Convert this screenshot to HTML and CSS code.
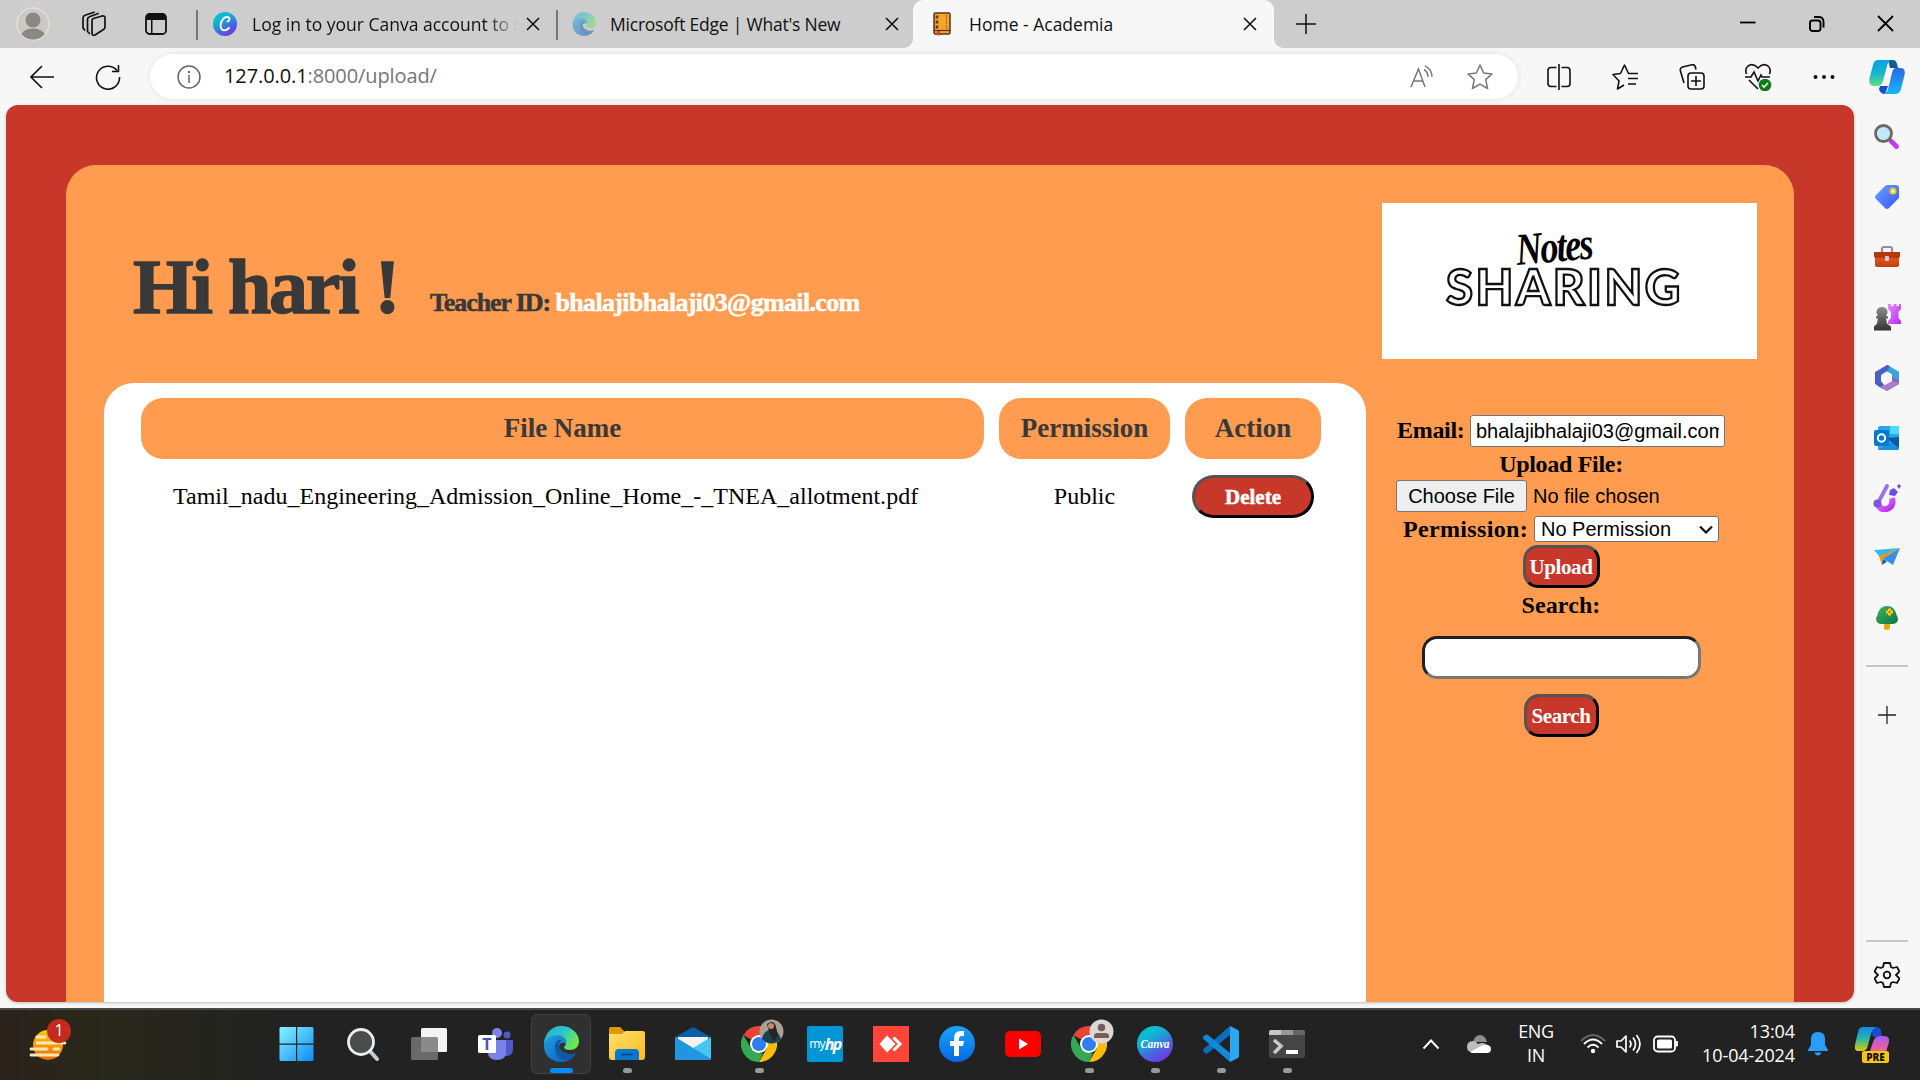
FILE: index.html
```html
<!DOCTYPE html>
<html lang="en">
<head>
<meta charset="utf-8">
<title>Home - Academia</title>
<link rel="stylesheet" href="styles.css">
</head>
<body>
<svg class="defs" width="0" height="0" aria-hidden="true">
  <defs>
    <linearGradient id="canva" x1="0.2" y1="0" x2="0.8" y2="1"><stop offset="0" stop-color="#00c4cc"/><stop offset=".3" stop-color="#10b3d4"/><stop offset=".65" stop-color="#4668e0"/><stop offset="1" stop-color="#7d2ae8"/></linearGradient>
    <linearGradient id="edgeTop" x1="0" y1="0" x2="1" y2=".5"><stop offset="0" stop-color="#2aa9e0"/><stop offset=".55" stop-color="#2fc6c8"/><stop offset="1" stop-color="#6be84f"/></linearGradient>
    <linearGradient id="edgeLow" x1="0" y1="0" x2=".8" y2="1"><stop offset="0" stop-color="#1fa0e4"/><stop offset="1" stop-color="#0a62bd"/></linearGradient>
    <linearGradient id="win" x1="0" y1="0" x2="1" y2="1"><stop offset="0" stop-color="#86f4fe"/><stop offset="1" stop-color="#0b8bf8"/></linearGradient>
    <linearGradient id="copA" x1="0" y1="0" x2="0" y2="1"><stop offset="0" stop-color="#0aa0e2"/><stop offset=".5" stop-color="#14b6cf"/><stop offset="1" stop-color="#62dc86"/></linearGradient>
    <linearGradient id="copB" x1="0" y1="0" x2="0" y2="1"><stop offset="0" stop-color="#2b6be0"/><stop offset="1" stop-color="#16b8ff"/></linearGradient>
    <linearGradient id="tag" x1="0" y1="0" x2="1" y2="1"><stop offset="0" stop-color="#69a8ff"/><stop offset="1" stop-color="#3b4fff"/></linearGradient>
    <linearGradient id="fuchsia" x1="0" y1="0" x2="1" y2="1"><stop offset="0" stop-color="#e58cff"/><stop offset="1" stop-color="#b829f0"/></linearGradient>
    <linearGradient id="pawn" x1="0" y1="0" x2="0" y2="1"><stop offset="0" stop-color="#8d8d8d"/><stop offset="1" stop-color="#333"/></linearGradient>
    <linearGradient id="red" x1="0" y1="0" x2="0" y2="1"><stop offset="0" stop-color="#e8672f"/><stop offset="1" stop-color="#c63d0d"/></linearGradient>
    <linearGradient id="folder" x1="0" y1="0" x2="1" y2="1"><stop offset="0" stop-color="#ffdf70"/><stop offset="1" stop-color="#fbba1a"/></linearGradient>
    <linearGradient id="fb" x1="0" y1="0" x2="0" y2="1"><stop offset="0" stop-color="#18a4fb"/><stop offset="1" stop-color="#0668e1"/></linearGradient>
    <linearGradient id="rainA" x1="0" y1="0" x2="0" y2="1"><stop offset="0" stop-color="#1a86ea"/><stop offset=".45" stop-color="#22b3b0"/><stop offset=".75" stop-color="#7cc24a"/><stop offset="1" stop-color="#e8c51c"/></linearGradient>
    <linearGradient id="rainB" x1="0" y1="0" x2="0" y2="1"><stop offset="0" stop-color="#a25cf2"/><stop offset=".6" stop-color="#ee5c9c"/><stop offset="1" stop-color="#f57f5c"/></linearGradient>
    <linearGradient id="sun" x1="0" y1="0" x2="0" y2="1"><stop offset="0" stop-color="#ffcd00"/><stop offset="1" stop-color="#ea6a07"/></linearGradient>
    <linearGradient id="tree" x1="0" y1="0" x2="1" y2="1"><stop offset="0" stop-color="#42b35c"/><stop offset="1" stop-color="#0d7741"/></linearGradient>
    <symbol id="x" viewBox="0 0 14 14"><path d="M1 1l12 12M13 1L1 13" fill="none" stroke="#111" stroke-width="1.6"/></symbol>
    <symbol id="edge" viewBox="0 0 36 36">
      <path fill="url(#edgeLow)" d="M1 20C0 11 6 7 15 9c5 1 9 5 8 9-5-4-9 2-6 7 3 5 10 6 16 2-3 6-9 9-15 9C8 36 1 29 1 20z"/>
      <path fill="#1458a5" d="M12 20c0-4 3-7 7-6-4 3-4 8 0 11 4 3 9 4 14 2-4 8-21 12-21-7z"/>
      <path fill="url(#edgeTop)" d="M1 17C2 7 9 0 18 0c11 0 18 8 18 15 0 6-4 9-9 9-4 0-6-1-6-3 2-2 3-5 1-8C18 7 6 8 1 17z"/>
    </symbol>
    <symbol id="chrome" viewBox="0 0 36 36">
      <path fill="#ea4335" d="M18 18L2.400 9A18 18 0 0 1 33.600 9z"/>
      <path fill="#fbbc05" d="M18 9h15.600A18 18 0 0 1 18 36l7.800-13.500z"/>
      <path fill="#34a853" d="M2.400 9l7.800 13.500L18 27l4 .500L18 36A18 18 0 0 1 2.400 9z"/>
      <circle cx="18" cy="18" r="9" fill="#fff"/><circle cx="18" cy="18" r="7" fill="#2f7df0"/>
    </symbol>
  </defs>
</svg>

<header class="tabs">
  <div class="tool profile"><svg width="34" height="34" viewBox="0 0 34 34"><defs><clipPath id="pc"><circle cx="17" cy="17" r="15.500"/></clipPath></defs><circle cx="17" cy="17" r="16" fill="#cbc9c5" stroke="#e2e0dc" stroke-width="1.400"/><g clip-path="url(#pc)" fill="#8b8783"><circle cx="17" cy="13" r="7.500"/><ellipse cx="17" cy="29.500" rx="12" ry="8"/></g></svg></div>
  <div class="tool spaces"><svg width="26" height="26" viewBox="0 0 26 26" fill="none" stroke="#111" stroke-width="1.700" stroke-linejoin="round" stroke-linecap="round"><path d="M12 9.500q0-1.500 1.500-2L22 5q3-.500 3 2v9q0 1.500-1.500 2.500L15 24q-3 1-3-2zM7.500 20V8.500q0-2 2-2.700L18 2.500M3 17V7q0-2 2-2.700L14 1.200M7.500 20.500l2 2M3 17l1.500 2"/></svg></div>
  <div class="tool actions"><svg width="22" height="22" viewBox="0 0 22 22"><rect x="1" y="1" width="20" height="20" rx="3.500" fill="none" stroke="#111" stroke-width="1.800"/><path d="M1 7V4q0-3 3-3h14q3 0 3 3v3zM6 6h1.500v15H6z" fill="#111"/></svg></div>
  <div class="tab canva-tab">
    <svg width="24" height="24" viewBox="0 0 24 24"><circle cx="12" cy="12" r="12" fill="url(#canva)"/><path d="M14.500 9.500c3-1 2.500-4.500-.500-4.500-4.500 0-7.500 7-6 11 1.300 3.300 5 3 8 0" fill="none" stroke="#fff" stroke-width="1.800" stroke-linecap="round"/></svg>
    <span class="tab-title t-canva">Log in to your Canva account to s</span>
    <svg width="14" height="14"><use href="#x"/></svg>
  </div>
  <div class="tab edge-tab">
    <svg class="faded" width="24" height="24"><use href="#edge"/></svg>
    <span class="tab-title t-edge">Microsoft Edge | What's New</span>
    <svg width="14" height="14"><use href="#x"/></svg>
  </div>
  <div class="tab active">
    <svg width="24" height="24" viewBox="0 0 24 24"><rect x="4" y="1" width="16" height="21" rx="1.500" fill="#f5a52b" stroke="#53351d" stroke-width="1.500"/><path d="M4 18.500h16" stroke="#53351d" stroke-width="1.200"/><path d="M16.500 3v14" stroke="#86521a" stroke-width=".9" stroke-dasharray="1.500 1"/><path d="M7 3.500v3M7 8.500v3M7 13.500v3" stroke="#6b3527" stroke-width="2.600"/><path d="M7 19v5l1.500-1.500L10 24v-5z" fill="#e03e35"/></svg>
    <span class="tab-title t-home">Home - Academia</span>
    <svg width="14" height="14"><use href="#x"/></svg>
  </div>
  <svg class="newtab" width="20" height="20" viewBox="0 0 20 20"><path d="M10 0v20M0 10h20" stroke="#111" stroke-width="1.500"/></svg>
  <div class="window-buttons">
    <svg width="16" height="16" viewBox="0 0 16 16"><path d="M0 7.500h15.500" stroke="#000" stroke-width="1.800"/></svg>
    <svg width="16" height="18" viewBox="0 0 16 18" fill="none" stroke="#000" stroke-width="1.900"><rect x="1" y="5.500" width="10.500" height="10.500" rx="2.500"/><path d="M5 2h4.500q5 0 5 5v5.500"/></svg>
    <svg width="17" height="17" viewBox="0 0 17 17"><path d="M1 1l15 15M16 1L1 16" stroke="#000" stroke-width="1.800"/></svg>
  </div>
</header>

<nav class="toolbar">
  <div class="nav-cell back"><svg width="24" height="24" viewBox="0 0 24 24" fill="none" stroke="#111" stroke-width="1.600"><path d="M24 12H1M12 1L1 12l11 11"/></svg></div>
  <div class="nav-cell reload"><svg width="26" height="26" viewBox="0 0 26 26" fill="none" stroke="#111" stroke-width="1.600"><path d="M22 6.500A11.500 11.500 0 1 0 24.500 13M23.500 1v6.500H17"/></svg></div>
  <div class="address">
    <svg width="24" height="24" viewBox="0 0 24 24" fill="none" stroke="#666" stroke-width="1.500"><circle cx="12" cy="12" r="11"/><path d="M12 10v8"/><path d="M12 6v2" stroke-width="2"/></svg>
    <div class="url"><b>127.0.0.1</b>:8000/upload/</div>
    <svg width="24" height="24" viewBox="0 0 24 24" fill="none" stroke="#777" stroke-width="1.500"><path d="M1 22L8.500 4 15 22M3.500 16h9.300M14 4.500q4 2.500 4 7.500M15 .8q7 3.500 7 11"/></svg>
    <svg width="26" height="26" viewBox="0 0 26 26" fill="none" stroke="#777" stroke-width="1.500" stroke-linejoin="round"><path d="M13 1l3.600 8 8.400.900-6.300 5.700 1.900 8.900L13 20.200l-7.600 4.300 1.900-8.900L1 9.900 9.400 9z"/></svg>
  </div>
  <div class="nav-tools">
    <svg width="26" height="26" viewBox="0 0 26 26" fill="none" stroke="#111" stroke-width="1.600"><path d="M13 0v26M10.500 3.500H5q-3 0-3 3v13q0 3 3 3h5.500M15.500 3.500H21q3 0 3 3v13q0 3-3 3h-5.500"/></svg>
    <svg width="26" height="26" viewBox="0 0 26 26" fill="none" stroke="#111" stroke-width="1.600" stroke-linejoin="round"><path d="M12 21l-6.500 4 1.500-8-6-6.500 7.500-1L12.500 1l4 8.500H26M16 14.500h10M16 20h8"/></svg>
    <svg width="26" height="26" viewBox="0 0 26 26" fill="none" stroke="#111" stroke-width="1.600"><rect x="9" y="9" width="16" height="16" rx="3"/><path d="M17 12v10M12 17h10M5 19L1.300 6.500Q.8 4 3.500 3L13 .8q2.500-.5 3.300 2L17 5.500"/></svg>
    <svg width="28" height="28" viewBox="0 0 28 28" fill="none" stroke="#111" stroke-width="1.600"><path d="M2.500 11Q.5 6 4 3q5-3.500 10 2 5-5.500 10-2 3.500 3 1.500 8M1 14h6l3-5 4 9 3-6 1 2h8M5 17l9 9"/><circle cx="21" cy="22" r="6.300" fill="#0f7b17" stroke="none"/><path d="M18 22l2 2 4-4" stroke="#fff"/></svg>
    <svg width="24" height="24" viewBox="0 0 24 24" fill="#111"><circle cx="3.500" cy="12" r="2"/><circle cx="12" cy="12" r="2"/><circle cx="20.500" cy="12" r="2"/></svg>
  </div>
  <div class="nav-cell copilot"><svg width="36" height="36" viewBox="0 0 36 36"><path d="M19 1h5q3 0 4 4l1 4h-8z" fill="#125c91"/><path d="M11 27h8l-3 8q-5 0-6-5z" fill="#1a4cd0"/><path d="M9 1h13q-3 1-4 6l-4 15q-1 5-6 5H5q-6 0-4.500-8L4 6q1-5 5-5z" fill="url(#copA)"/><path d="M27 9h4q6 0 4.500 7L32 30q-1 5-6 5H14q4-1 5-5l4-16q1-5 4-5z" fill="url(#copB)"/></svg></div>
</nav>

<div class="content">
  <main class="viewport">
    <div class="card">
      <section class="left">
        <div class="greeting"><h1>Hi hari !</h1><h2>Teacher ID: <span>bhalajibhalaji03@gmail.com</span></h2></div>
        <div class="panel">
          <div class="row head"><div>File Name</div><div>Permission</div><div>Action</div></div>
          <div class="row"><div class="file">Tamil_nadu_Engineering_Admission_Online_Home_-_TNEA_allotment.pdf</div><div class="perm">Public</div><div class="act"><button class="btn delete">Delete</button></div></div>
        </div>
      </section>
      <aside class="right">
        <div class="logo"><span class="logo-notes">Notes</span><span class="logo-sharing">SHARING</span></div>
        <form class="form">
          <div class="field email"><label>Email:</label><input class="mail" type="text" value="bhalajibhalaji03@gmail.com"></div>
          <label class="center upload-label">Upload File:</label>
          <div class="field file-field"><span class="choose">Choose File</span><span class="nofile">No file chosen</span></div>
          <div class="field permission"><label>Permission:</label><div class="select"><span>No Permission</span><svg width="14" height="9" viewBox="0 0 14 9"><path d="M1 1.500l6 6 6-6" fill="none" stroke="#111" stroke-width="2.200"/></svg></div></div>
          <button type="button" class="btn upload">Upload</button>
          <label class="center search-label">Search:</label>
          <input class="search" type="text">
          <button type="button" class="btn find">Search</button>
        </form>
      </aside>
    </div>
  </main>
  <aside class="sidebar">
    <div class="apps">
      <svg width="26" height="26" viewBox="0 0 26 26"><path d="M17 17l5.500 5.500" stroke="#c23df5" stroke-width="4.800" stroke-linecap="round"/><path d="M14 14l3 3" stroke="#6b6967" stroke-width="3"/><circle cx="9.500" cy="9.500" r="8" fill="#c4e8fb" stroke="#6b6967" stroke-width="2.800"/></svg>
      <svg width="26" height="26" viewBox="0 0 26 26"><path d="M13 1h9q3 0 3 3v9q0 1-1 2l-9 9q-2 2-4 0l-9-9q-2-2 0-4l9-9q1-1 2-1z" fill="url(#tag)"/><circle cx="19" cy="7" r="2.500" fill="#fff" stroke="#f5c816" stroke-width="2"/></svg>
      <svg width="28" height="26" viewBox="0 0 28 26"><path d="M9 8V5q0-2 2-2h6q2 0 2 2v3" fill="none" stroke="#929292" stroke-width="2.200"/><rect x="2" y="8" width="24" height="15" rx="2" fill="url(#red)"/><path d="M1 8h26v4q0 2-3 2H4q-3 0-3-2z" fill="#b5380e"/><rect x="12" y="12" width="4" height="5" rx="1" fill="#ccc"/></svg>
      <svg width="28" height="28" viewBox="0 0 28 28"><path d="M15 1h3v2h2.500V1h3v2H26V1h2v5l-2.500 3v6l2.500 3v3H15v-3l3-3V9l-3-3z" fill="url(#fuchsia)"/><path d="M9 4a5 5 0 0 1 4 8.500l2 1v2h-2l1 5 4 3v4H1v-4l3-3 1-5H3v-2l2-1A5 5 0 0 1 9 4z" fill="url(#pawn)"/></svg>
      <svg width="26" height="28" viewBox="0 0 26 28"><path d="M13 1l12 7v12L18 16V10l-5-3-8 4z" fill="#37a0dc"/><path d="M25 20l-12 7-9-5 9-1 5-3V9l7 4z" fill="#8e67ba"/><path d="M13 1l12 7v8l-7-3v-3l-6-3z" fill="#36a4df"/><path d="M13 1L1 8v12l8 5 1-4-3-4v-6l6-4 3-5z" fill="#4b5fc4"/><path d="M25 19l-12 8-7-4 7-3 5-3z" fill="#a681ca"/><circle cx="13" cy="14" r="4.500" fill="#f7f7f7"/></svg>
      <svg width="26" height="26" viewBox="0 0 26 26"><path d="M6 1h17q2 0 2 2v20q0 2-2 2H4V3q0-2 2-2z" fill="#28a8ea"/><path d="M16 1h9v8h-9z" fill="#50d9ff"/><path d="M4 25l21-12v10q0 2-2 2z" fill="#1490df"/><path d="M12 13l13 10V12z" fill="#0a5c9d"/><rect x="0" y="5" width="15" height="16" rx="2" fill="#0078d4"/><circle cx="7.500" cy="13" r="3.700" fill="none" stroke="#fff" stroke-width="2"/></svg>
      <svg width="28" height="28" viewBox="0 0 28 28"><path d="M4 19q4 8.500 11 5.500 6-3 4-10.500" fill="none" stroke="url(#fuchsia)" stroke-width="6"/><path d="M14 2L5 19" stroke="#9a73e4" stroke-width="3.800" stroke-linecap="round"/><circle cx="4.500" cy="19.500" r="4" fill="#7d55df"/><path d="M17 6l4-2 4 4-3 4-6-1zM24 2l2-2 2 2-2 3z" fill="#6f4bec"/></svg>
      <svg width="26" height="24" viewBox="0 0 26 24"><path d="M0 4L26 2 6 11z" fill="#35baf3"/><path d="M5 10L26 2 9 13l-1 6z" fill="#e99a12"/><path d="M9 12.500L26 2l-7 17z" fill="#368ff0"/><path d="M9 13l-1 6 5-3.500z" fill="#0d58b5"/></svg>
      <svg width="24" height="26" viewBox="0 0 24 26"><path d="M9 16h6v8q-3 2-6 0z" fill="#f5a414"/><path d="M12 1c6 0 9 5 9.500 9 3 4 1 9-3.500 9H6c-4.500 0-6.500-5-3.500-9C3 6 6 1 12 1z" fill="url(#tree)"/><path d="M14.500 3.500v7M11 7h7" stroke="#ffcd17" stroke-width="3"/><circle cx="14.500" cy="7" r="1.200" fill="#db6c00"/></svg>
    </div>
    <hr>
    <svg class="plus" width="18" height="18" viewBox="0 0 18 18"><path d="M9 0v18M0 9h18" stroke="#222" stroke-width="1.300"/></svg>
    <hr class="low">
    <svg class="gear" width="26" height="26" viewBox="0 0 26 26" fill="none" stroke="#111" stroke-width="1.800" stroke-linejoin="round"><path d="M10 1h6l1 4 2 1 4-1 2.500 4.500L22 13l3.500 3.500L23 21l-4-1-2 1-1 4h-6l-1-4-2-1-4 1-2.500-4.500L4 13 .5 9.500 3 5l4 1 2-1z"/><circle cx="13" cy="13" r="3.300"/></svg>
  </aside>
</div>

<footer class="taskbar">
  <div class="weather"><svg width="44" height="48" viewBox="0 0 44 48"><ellipse cx="23" cy="27" rx="15" ry="15" fill="url(#sun)"/><path d="M12 19h8M12 25h20M6 31h16M29 31h5M6 37h27M35 25h5" stroke="#fbe5b4" stroke-width="2.800" stroke-linecap="round"/></svg><span class="badge">1</span></div>
  <div class="dock">
    <div><svg width="36" height="36" viewBox="0 0 36 36"><path d="M2 1h15v16.500H.500V2.500Q.500 1 2 1zM18.200 1H33q1.500 0 1.500 1.500v15H18.200zM.500 18.700H17V35H2Q.500 35 .500 33.500zM18.200 18.700h16.300v14.800q0 1.500-1.500 1.500H18.200z" fill="url(#win)"/></svg></div>
    <div><svg width="34" height="36" viewBox="0 0 34 36"><path d="M23 24l8 9" stroke="#c8ccd0" stroke-width="4" stroke-linecap="round"/><circle cx="15" cy="16" r="12.500" fill="#4a4c4d" stroke="#eceeee" stroke-width="2.800"/></svg></div>
    <div><svg width="36" height="36" viewBox="0 0 36 36"><rect x="10" y="2" width="26" height="24" rx="1.500" fill="#f3f3f3"/><rect x="0" y="11" width="27" height="23" rx="1.500" fill="#777" opacity=".85"/></svg></div>
    <div><svg width="36" height="36" viewBox="0 0 36 36"><circle cx="20" cy="7" r="5" fill="#7b83eb"/><circle cx="30" cy="9" r="3.500" fill="#5059c9"/><path d="M24 14h12v9q0 7-7 7h-5z" fill="#5059c9"/><path d="M11 14h18v12q0 8-9 8t-9-8z" fill="#7b83eb"/><rect x="1" y="9" width="18" height="18" rx="1.500" fill="#fff"/><text x="10" y="24" text-anchor="middle" class="teams-t">T</text></svg></div>
    <div class="current"><svg width="36" height="36"><use href="#edge"/></svg></div>
    <div class="open"><svg width="36" height="36" viewBox="0 0 36 36"><path d="M0 3q0-2 2-2h9l4 4v3H0z" fill="#dc9a08"/><path d="M0 8h13l3-3h18q2 0 2 2v24q0 3-3 3H3q-3 0-3-3z" fill="url(#folder)"/><path d="M6 34V27q0-4 4-4h16q4 0 4 4v7z" fill="#0877cf"/><path d="M12 28.500h12" stroke="#0b508e" stroke-width="2"/></svg></div>
    <div><svg width="36" height="36" viewBox="0 0 36 36"><path d="M18 1l18 10v3H0v-3z" fill="#0a5ea8"/><path d="M3 11h30v16H3z" fill="#f2f2f2"/><path d="M0 11l18 11L36 11v21q0 2-2 2H2q-2 0-2-2z" fill="#45c5f2"/><path d="M0 11l36 22q-1 1-2 1H2q-2 0-2-2z" fill="#2295e0"/></svg></div>
    <div class="open"><svg width="36" height="36"><use href="#chrome"/></svg><svg class="who" width="25" height="25" viewBox="0 0 25 25"><circle cx="12.500" cy="12.500" r="12" fill="#aaa291"/><path d="M3 20q2-9 9-9t10 9q-10 9-19 0z" fill="#174350"/><path d="M8 5q7-5 9 3l2 8-4 7-5-10z" fill="#2a2220"/><circle cx="12" cy="7" r="3" fill="#c28c6d"/></svg></div>
    <div><div class="myhp"><span>my</span><b>hp</b></div></div>
    <div><svg width="36" height="36" viewBox="0 0 36 36"><path d="M0 0h36v36H0z" fill="#ff443a"/><path d="M14 9.500l8.500 8.500-8.500 8.500L6.500 18z" fill="#fff"/><path d="M20.500 11.500L27 18l-6.500 6.500" fill="none" stroke="#fff" stroke-width="3"/></svg></div>
    <div><svg width="36" height="36" viewBox="0 0 36 36"><circle cx="18" cy="18" r="18" fill="url(#fb)"/><path d="M15 30V20h-4v-5h4v-3q0-7 7-7h3v5h-2q-3 0-3 3v2h5l-1 5h-4v10z" fill="#fff"/></svg></div>
    <div><svg width="36" height="26" viewBox="0 0 36 26"><rect width="36" height="26" rx="5" fill="#f00"/><path d="M14 7.500l9 5.500-9 5.500z" fill="#fff"/></svg></div>
    <div class="open"><svg width="36" height="36"><use href="#chrome"/></svg><svg class="who" width="25" height="25" viewBox="0 0 25 25"><circle cx="12.500" cy="12.500" r="12" fill="#ded8d5"/><circle cx="12.500" cy="8.500" r="3.800" fill="#735f58"/><path d="M5 19v-2q0-3 4-3h7q4 0 4 3v2z" fill="#735f58"/></svg></div>
    <div class="open"><svg width="36" height="36" viewBox="0 0 36 36"><circle cx="18" cy="18" r="18" fill="url(#canva)"/><text x="18" y="21.500" text-anchor="middle" class="canva-t" textLength="29" lengthAdjust="spacingAndGlyphs">Canva</text></svg></div>
    <div class="open"><svg width="36" height="36" viewBox="0 0 36 36"><path d="M27 0l8 4q1 .5 1 2v24q0 1.500-1 2l-8 4z" fill="#29a9f1"/><path d="M27 0v9L5 27q-1.500 1-3 0l-1.500-1.500q-1-1.500 0-2.500z" fill="#0870bd"/><path d="M27 36v-9L5 9Q3.500 8 2 9L.5 10.500q-1 1.500 0 2.500z" fill="#1389d5"/></svg></div>
    <div class="open"><svg width="36" height="28" viewBox="0 0 36 28"><rect y="0" width="36" height="28" rx="2" fill="#454545"/><path d="M2 0h10v5H0V2q0-2 2-2z" fill="#c8c8c8"/><path d="M12 0h12v5H12z" fill="#999"/><path d="M24 0h10q2 0 2 2v3H24z" fill="#666"/><path d="M5 10l7 6-7 7" fill="none" stroke="#c9c9c9" stroke-width="3.500"/><path d="M17 20h12v4H17z" fill="#fff"/></svg></div>
  </div>
  <div class="tray">
    <svg class="t1" width="18" height="12" viewBox="0 0 18 12"><path d="M1.500 10.500L9 2.500l7.500 8" fill="none" stroke="#fff" stroke-width="1.900"/></svg>
    <svg class="t2" width="26" height="20" viewBox="0 0 26 20"><path d="M7 8Q9 1 14 1t7 7z" fill="#8e8e8e"/><path d="M6 18q-5 0-5-5 0-6 6-6 3 0 5 3 6-3 12 3L18 18z" fill="#bcbcbc"/><path d="M4 18l11-6q3-2 5-1 5 0 5 4 0 4-4 4H6z" fill="#fff"/></svg>
    <div class="lang"><span>ENG</span><span>IN</span></div>
    <svg class="t3" width="26" height="22" viewBox="0 0 26 22" fill="none" stroke="#fff" stroke-width="1.900"><path d="M1 8q12-12 24 0" stroke="#666"/><path d="M4 11q9-9 18 0M7.500 14.500q5.500-5.500 11 0"/><circle cx="13" cy="18" r="2.200" fill="#fff" stroke="none"/></svg>
    <svg class="t4" width="26" height="22" viewBox="0 0 26 22" fill="none" stroke="#fff" stroke-width="1.700"><path d="M1 8v6h4l5 5V3L5 8zM13.500 7.500q3 3.500 0 7M17 4.500q5 6.500 0 13M20.500 2q7 9 0 18" stroke-linejoin="round"/></svg>
    <svg class="t5" width="26" height="18" viewBox="0 0 26 18"><rect x="1" y="1.500" width="21" height="15" rx="3.500" fill="none" stroke="#fff" stroke-width="1.800"/><rect x="4" y="4.500" width="15" height="9" rx="1.500" fill="#fff"/><path d="M23 6.500h1.500V11H23z" fill="#fff" stroke="#fff"/></svg>
    <div class="clock"><span class="time">13:04</span><span class="date">10-04-2024</span></div>
    <svg class="t6" width="20" height="24" viewBox="0 0 20 24"><path d="M10 0q7 0 7 7v6l3 5v1H0v-1l3-5V7q0-7 7-7zM6.500 20.500h7q-1 3-3.500 3t-3.500-3z" fill="#289dfd"/></svg>
    <div class="pre"><svg width="36" height="36" viewBox="0 0 36 36"><path d="M17 1h6q3 0 4 4l1 6h-9z" fill="#1a4bd0"/><path d="M9 1h13q-4 2-5 7l-3 11q-1 6-6 6H4q-4 0-3-6L4 6q1-5 5-5z" fill="url(#rainA)"/><path d="M26 10h4q6 0 5 6l-3 10q-1 5-6 5H14l5-15q2-6 7-6z" fill="url(#rainB)"/></svg><span>PRE</span></div>
  </div>
</footer>
</body>
</html>
```
FILE: styles.css
```css
* { box-sizing: border-box; }
body {
  margin: 0; width: 1920px; height: 1080px; overflow: hidden;
  display: flex; flex-direction: column; background: #f7f7f7;
  font-family: "Open Sans", "Noto Sans", sans-serif; color: #111;
}
svg { display: block; flex: none; }
.defs { position: absolute; }

/* tab strip */
.tabs { height: 48px; flex: none; background: #cdcdcd; display: flex; align-items: center; }
.tool { display: flex; justify-content: center; flex: none; }
.profile { width: 66px; }
.spaces { width: 53px; }
.actions { width: 74px; margin-right: 3px; }
.tab { height: 48px; display: flex; align-items: center; flex: none; }
.tab-title { font-size: 17.500px; white-space: nowrap; overflow: hidden; line-height: 24px; margin-top: -1px; }
.canva-tab { width: 360px; background: linear-gradient(#777, #777) 0 10px / 2px 30px no-repeat; padding-left: 17px; }
.t-canva { width: 264px; margin: -1px 10px 0 15px; -webkit-mask-image: linear-gradient(90deg, #000 235px, transparent 266px); mask-image: linear-gradient(90deg, #000 235px, transparent 266px); }
.edge-tab { width: 357px; background: linear-gradient(#777, #777) 0 10px / 2px 30px no-repeat; padding-left: 16px; }
.faded { opacity: .5; }
.t-edge { width: 260px; margin-left: 14px; margin-right: 15px; letter-spacing: -.22px; }
.active { position: relative; width: 361px; background: #f7f7f7; border-radius: 10px 10px 0 0; padding-left: 17px; }
.active::before, .active::after { content: ""; position: absolute; bottom: 0; width: 9px; height: 9px; }
.active::before { left: -9px; background: radial-gradient(circle at 0 0, transparent 8.5px, #f7f7f7 9px); }
.active::after { right: -9px; background: radial-gradient(circle at 100% 0, transparent 8.5px, #f7f7f7 9px); }
.t-home { width: 260px; margin-left: 15px; margin-right: 14px; }
.newtab { margin-left: 22px; }
.window-buttons { margin-left: auto; display: grid; grid-template-columns: 69px 69px 69px; justify-items: center; }

/* toolbar */
.toolbar { height: 57px; flex: none; display: flex; align-items: center; }
.nav-cell { display: flex; justify-content: center; }
.back { width: 84px; }
.reload { width: 48px; }
.address { width: 1368px; height: 45px; margin-left: 18px; background: #fff; border-radius: 23px; box-shadow: 0 0 5px #e0e0e0; display: flex; align-items: center; padding: 0 24px 0 27px; }
.url { width: 1185px; margin: -1px 0 0 23px; font-size: 20px; line-height: 28px; color: #757575; letter-spacing: -.1px; }
.url b { font-weight: 400; color: #111; }
.address svg:nth-of-type(2) { margin-right: 33px; margin-left: 1px; }
.nav-tools { display: grid; grid-template-columns: repeat(5, 66.3px); justify-items: center; align-items: center; width: 332px; margin-left: 8px; }
.copilot { width: 58px; }

.content { height: 903px; flex: none; display: flex; }
.viewport { width: 1848px; height: 897px; margin-left: 6px; background: #c7382b; border-radius: 12px; overflow: hidden; padding: 60px 60px 0; box-shadow: 0 1px 3px #bbb; }
.card { height: 837px; background: #ff9c50; border-radius: 30px 30px 0 0; display: flex; }
.left { width: 1300px; padding-left: 38px; font-family: "Liberation Serif", serif; }
.greeting { height: 218px; padding: 74px 0 0 29px; display: flex; align-items: baseline; color: #393939; }
h1, h2 { margin: 0; white-space: nowrap; }
h1 { font-size: 78px; line-height: 95px; letter-spacing: -2.300px; width: 297px; -webkit-text-stroke: 1.4px #393939; }
h2 { font-size: 26px; line-height: 30px; letter-spacing: -1.100px; -webkit-text-stroke: .5px; padding-bottom: 2px; transform: translateY(-2px); }
h2 span { color: #fff; letter-spacing: -.650px; }
.panel { height: 619px; width: 1262px; background: #fff; border-radius: 30px 30px 0 0; padding: 15px 45px 0 37px; }
.row { display: grid; grid-template-columns: 843px 171px 136px; column-gap: 15px; text-align: center; font-size: 24px; color: #000; }
.head div { height: 61px; line-height: 61px; background: #ff9c50; border-radius: 22px; font-size: 27px; font-weight: 700; color: #393939; }
.row:not(.head) { height: 75px; align-items: center; }
.file { text-align: left; padding-left: 32px; letter-spacing: .015px; }
.btn { font: 700 21px "Liberation Serif", serif; letter-spacing: -.4px; height: 43px; padding: 2px 0 0; margin: 0; background: #c7382b; color: #fff; border: 3px outset #000; border-radius: 15px; white-space: nowrap; }
.delete { width: 122px; border-radius: 22px; display: block; margin: auto; letter-spacing: 0; -webkit-text-stroke: .5px #fff; }

.right { width: 428px; padding: 38px 0 0 16px; }
.logo { width: 375px; height: 156px; background: #fff; display: flex; flex-direction: column; align-items: flex-start; }
.logo-notes { font: italic 700 42px/44px "Liberation Serif", serif; letter-spacing: -2px; margin: 25px 0 0 134px; transform: rotate(-5deg) scale(.86, 1.08); transform-origin: left; color: #000; }
.logo-sharing { font: 900 49px/50px Lato, sans-serif; margin: -11px 0 0 64px; letter-spacing: 2.500px; color: #fff; -webkit-text-stroke: 2.3px #111; }
.form { width: 358px; margin-top: 55px; display: flex; flex-direction: column; align-items: center; font: 700 24px/30px "Liberation Serif", serif; color: #000; }
.form label { letter-spacing: -.3px; white-space: nowrap; }
.field { display: flex; align-items: center; }
.email { height: 34px; }
.email label { width: 73px; margin-top: -2px; }
.mail { width: 255px; height: 32px; border: 1px solid #767676; border-radius: 3px; padding: 0 5px; font: 20px "Liberation Sans", sans-serif; }
.upload-label { height: 31px; padding-top: 1px; }
.file-field { height: 34px; width: 330px; font: 20px "Liberation Sans", sans-serif; }
.choose { width: 131px; height: 32px; line-height: 30px; border: 1px solid #767676; border-radius: 3px; background: #efefef; text-align: center; }
.nofile { margin-left: 6px; }
.permission { height: 32px; }
.form .permission label { width: 131px; letter-spacing: .35px; }
.select { width: 185px; height: 26px; border: 1px solid #767676; border-radius: 3px; background: #fff; display: flex; align-items: center; justify-content: space-between; padding: 0 5px 0 6px; font: 20px/24px "Liberation Sans", sans-serif; }
.upload { width: 77px; }
.form .search-label { height: 30px; margin: 2px 0 16px; letter-spacing: .1px; }
.search { width: 279px; height: 43px; border: 3px inset #767676; border-radius: 15px; background: #fff; margin: 0 0 15px; }
.find { width: 75px; }

/* side rail */
.sidebar { width: 66px; display: flex; flex-direction: column; align-items: center; }
.apps { display: grid; grid-auto-rows: 60.150px; place-items: center; margin-top: 2px; }
hr { width: 42px; height: 2px; border: 0; background: #c6c6c6; margin: 17px 0 0; flex: none; }
.plus { margin-top: 39px; }
.low { margin-top: 216px; }
.gear { margin-top: 20px; }

/* taskbar */
.taskbar { height: 72px; flex: none; background: linear-gradient(90deg, #2c221b 0, #28281a 90px, #222 280px); border-top: 2px solid #484848; display: flex; color: #fff; }
.weather { width: 264px; padding: 8px 0 0 25px; position: relative; }
.badge { position: absolute; left: 47px; top: 9px; width: 24px; height: 24px; border-radius: 50%; background: #c42b1c; font-size: 16px; line-height: 23px; text-align: center; }
.dock { display: grid; grid-template-columns: repeat(16, 66px); height: 70px; }
.dock > div { position: relative; display: flex; align-items: center; justify-content: center; height: 68px; }
.dock > .current { margin: 4px 3px 0; height: 60px; background: #303030; border: 1px solid #414141; border-radius: 6px; }
.open::after, .current::after { content: ""; position: absolute; bottom: 5px; width: 9px; height: 5px; border-radius: 3px; background: #999; }
.current::after { bottom: 0; width: 23px; background: #078cff; }
.who { position: absolute; left: 33px; top: 9px; }
.myhp { width: 36px; height: 36px; background: #0096d6; border-radius: 2px; display: flex; align-items: center; justify-content: center; font: 12px/36px "Open Sans", sans-serif; letter-spacing: -.8px; }
.myhp b { font: italic 700 16px/36px "Open Sans", sans-serif; letter-spacing: -1.500px; }
.teams-t { font: 700 16px "Open Sans", sans-serif; fill: #4b53bc; }
.canva-t { font: italic 700 12px "Liberation Serif", serif; fill: #fff; }
.tray { display: flex; align-items: center; height: 68px; width: 600px; }
.t1 { margin-left: 102px; }
.t2 { margin-left: 26px; }
.lang, .clock { display: flex; flex-direction: column; font-size: 18px; line-height: 24px; letter-spacing: -.400px; margin-top: -2px; }
.lang { width: 44px; margin-left: 22px; align-items: center; }
.t3 { margin-left: 22px; }
.t4 { margin-left: 10px; }
.t5 { margin-left: 11px; }
.clock { width: 116px; align-items: flex-end; white-space: nowrap; letter-spacing: -.100px; }
.t6 { margin-left: 13px; }
.pre { position: relative; margin-left: 26px; }
.pre span { position: absolute; left: 8px; top: 25px; width: 27px; height: 12px; background: #fcc70b; border-radius: 2px; color: #111; font: 800 10px/12px "Open Sans", sans-serif; text-align: center; }
```
